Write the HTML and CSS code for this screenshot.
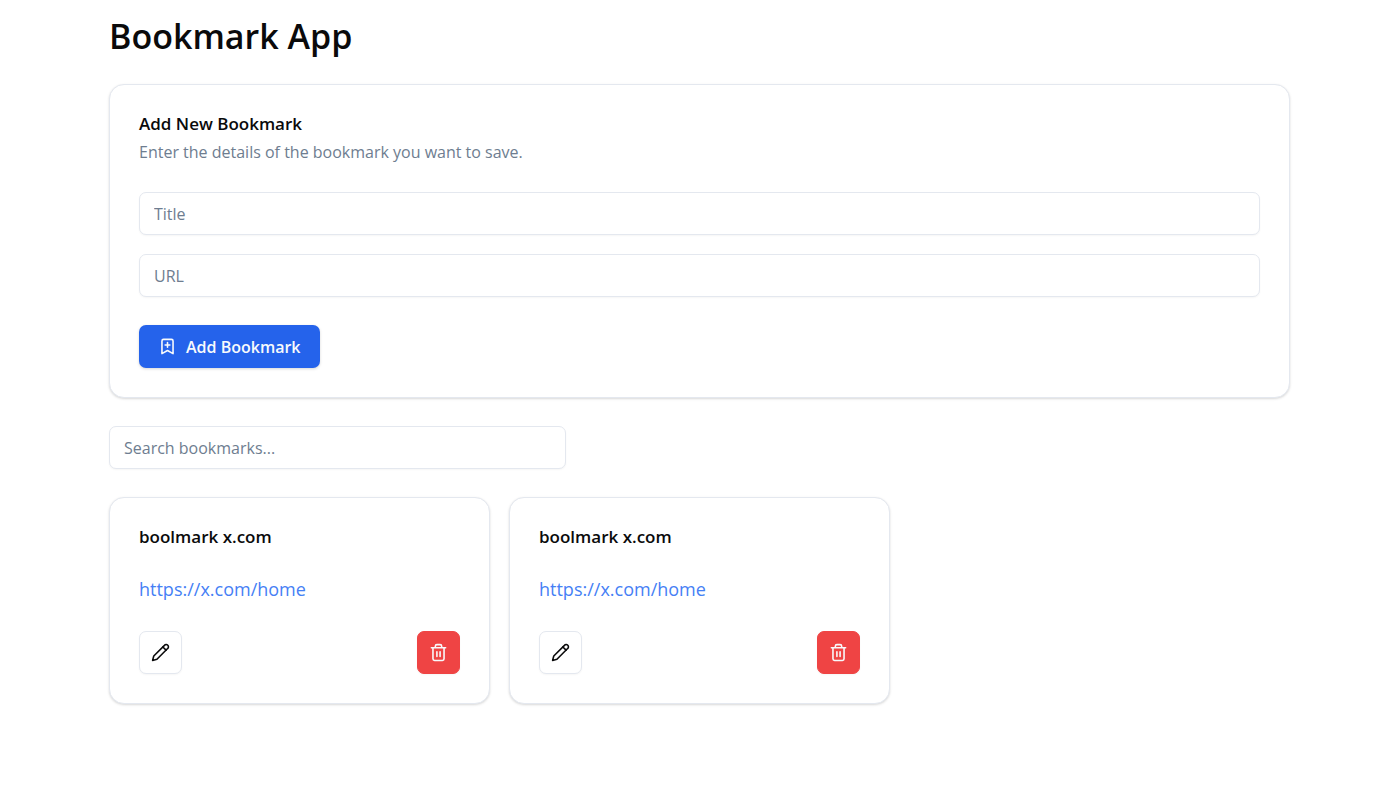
FILE: index.html
```html
<!DOCTYPE html>
<html lang="en">
<head>
<meta charset="utf-8">
<meta name="viewport" content="width=device-width, initial-scale=1">
<title>Bookmark App</title>
<link rel="stylesheet" href="styles.css">
</head>
<body>
<svg class="sprite" aria-hidden="true">
  <symbol id="bookmark-plus" viewBox="0 0 24 24"><path d="m19 21-7-4-7 4V5a2 2 0 0 1 2-2h10a2 2 0 0 1 2 2v16z"/><path d="M12 7v6M15 10H9"/></symbol>
  <symbol id="pencil" viewBox="0 0 24 24"><path d="M17 3a2.85 2.83 0 1 1 4 4L7.5 20.5 2 22l1.5-5.5Z"/><path d="m15 5 4 4"/></symbol>
  <symbol id="trash" viewBox="0 0 24 24"><path d="M3 6h18M19 6v14c0 1-1 2-2 2H7c-1 0-2-1-2-2V6M8 6V4c0-1 1-2 2-2h4c1 0 2 1 2 2v2M10 11v6M14 11v6"/></symbol>
</svg>
<main class="container">
  <h1 class="page-title">Bookmark App</h1>

  <section class="card form-card">
    <h2 class="card-title">Add New Bookmark</h2>
    <p class="card-description">Enter the details of the bookmark you want to save.</p>
    <form class="bookmark-form">
      <input class="input" type="text" placeholder="Title" aria-label="Title">
      <input class="input" type="url" placeholder="URL" aria-label="URL">
      <button class="button button-primary" type="submit"><svg class="icon"><use href="#bookmark-plus"/></svg>Add Bookmark</button>
    </form>
  </section>

  <input class="input search" type="search" placeholder="Search bookmarks..." aria-label="Search bookmarks">

  <section class="bookmark-grid">
    <article class="card bookmark-card">
      <h2 class="card-title">boolmark x.com</h2>
      <a class="bookmark-link" href="https://x.com/home">https://x.com/home</a>
      <div class="card-actions">
        <button class="button button-icon" type="button" aria-label="Edit bookmark"><svg class="icon"><use href="#pencil"/></svg></button>
        <button class="button button-icon button-danger" type="button" aria-label="Delete bookmark"><svg class="icon"><use href="#trash"/></svg></button>
      </div>
    </article>
    <article class="card bookmark-card">
      <h2 class="card-title">boolmark x.com</h2>
      <a class="bookmark-link" href="https://x.com/home">https://x.com/home</a>
      <div class="card-actions">
        <button class="button button-icon" type="button" aria-label="Edit bookmark"><svg class="icon"><use href="#pencil"/></svg></button>
        <button class="button button-icon button-danger" type="button" aria-label="Delete bookmark"><svg class="icon"><use href="#trash"/></svg></button>
      </div>
    </article>
  </section>
</main>
</body>
</html>
```
FILE: styles.css
```css
*, *::before, *::after {
  box-sizing: border-box;
}

body {
  margin: 0;
  background: #fff;
  color: #0a0a0b;
  font-family: "Open Sans", "Noto Sans", sans-serif;
  font-size: 16px;
  line-height: 24px;
}

h1, h2, p {
  margin: 0;
}

.sprite {
  position: absolute;
  width: 0;
  height: 0;
}

.container {
  max-width: 1230px;
  margin: 0 auto;
  padding: 14px 25px 24px 24px;
}

.page-title {
  margin-bottom: 26px;
  font-size: 34px;
  font-weight: 600;
  line-height: 44px;
}

.card {
  padding: 28px 29px 29px;
  border: 1px solid #e4e8ef;
  border-radius: 15px;
  background: #fff;
  box-shadow: 0 1px 3px rgba(0, 0, 0, 0.1), 0 1px 2px rgba(0, 0, 0, 0.06);
}

.card-title {
  font-size: 17px;
  font-weight: 600;
  line-height: 21px;
}

.card-description {
  margin-top: 6px;
  color: #6e7d90;
}

.bookmark-form {
  display: flex;
  flex-direction: column;
  align-items: flex-start;
  gap: 19px;
  margin-top: 28px;
}

.input {
  display: block;
  width: 100%;
  height: 43px;
  padding: 0 14px;
  border: 1px solid #e4e8ef;
  border-radius: 7px;
  background: #fff;
  box-shadow: 0 1px 2px rgba(0, 0, 0, 0.04);
  color: inherit;
  font: inherit;
}

.input::placeholder {
  color: #6e7d90;
  opacity: 1;
}

.button {
  display: inline-flex;
  align-items: center;
  justify-content: center;
  gap: 9px;
  height: 43px;
  border: 0;
  border-radius: 7px;
  font: inherit;
  cursor: pointer;
}

.button-primary {
  margin-top: 9px;
  padding: 0 19px;
  background: #2563eb;
  box-shadow: 0 1px 3px rgba(0, 0, 0, 0.16);
  color: #f8fafc;
  font-weight: 600;
}

.button-icon {
  width: 43px;
  border: 1px solid #e4e8ef;
  background: #fff;
  box-shadow: 0 1px 2px rgba(0, 0, 0, 0.04);
  color: #0a0a0b;
}

.button-danger {
  border-color: #ef4444;
  background: #ef4444;
  color: #f8fafc;
}

.icon {
  flex: none;
  width: 19px;
  height: 19px;
  fill: none;
  stroke: currentColor;
  stroke-width: 2;
  stroke-linecap: round;
  stroke-linejoin: round;
}

.search {
  max-width: 457px;
  margin: 28px 0;
}

.bookmark-grid {
  display: grid;
  grid-template-columns: repeat(3, 1fr);
  gap: 19px;
}

.bookmark-link {
  display: block;
  margin: 28px 0;
  color: #4580f5;
  font-size: 18px;
  line-height: 28px;
  text-decoration: none;
}

.card-actions {
  display: flex;
  justify-content: space-between;
}

@media (max-width: 800px) {
  .bookmark-grid {
    grid-template-columns: 1fr;
  }
}
```
